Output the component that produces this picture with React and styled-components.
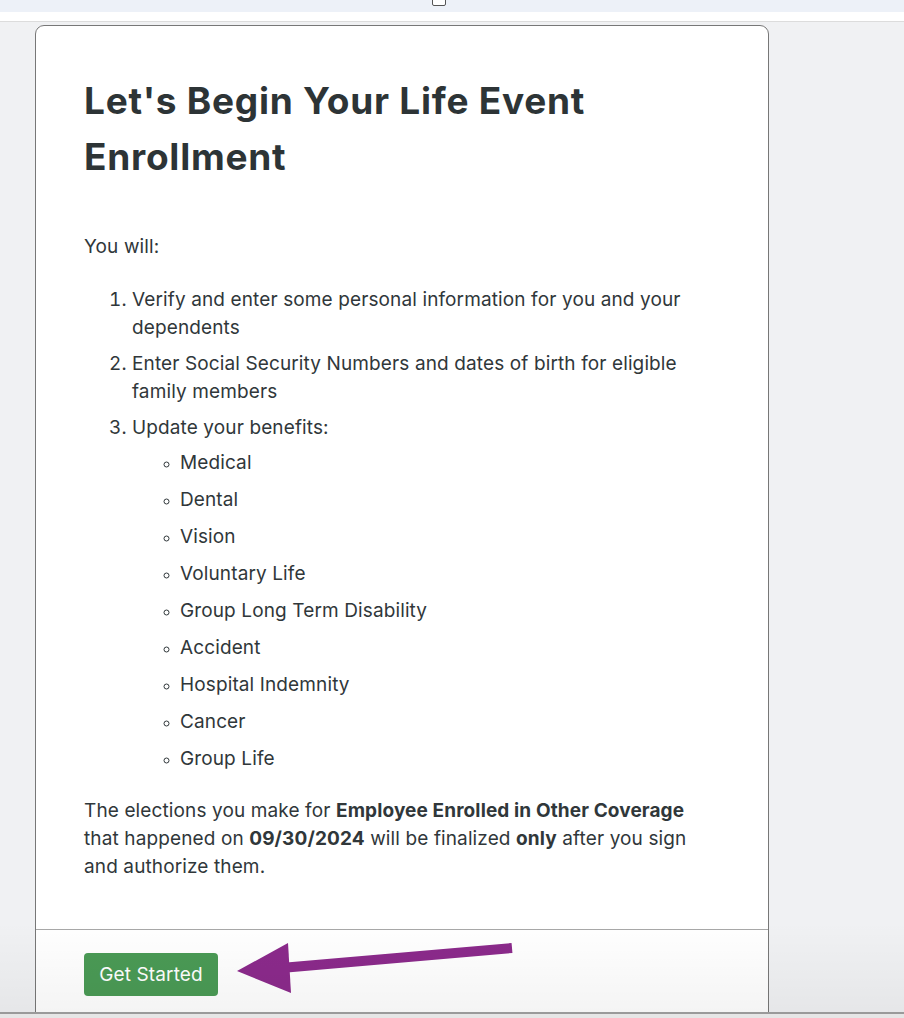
import React from "react";
import styled, { createGlobalStyle } from "styled-components";

const Global = createGlobalStyle`
  html, body { margin: 0; padding: 0; height: 100%; overflow: hidden; }
  body { font-family: Inter, "Noto Sans", sans-serif; background: #f0f1f3; }
  #root { height: 100%; }
`;

const Frame = styled.div`
  height: 100vh;
  display: flex;
  flex-direction: column;
  position: relative;
`;

const TopStrip = styled.div`
  height: 12px;
  background: #edf1f8;
  position: relative;
  flex: none;
`;

const Handle = styled.div`
  position: absolute;
  left: 432px;
  top: -6px;
  width: 12px;
  height: 10px;
  background: #fff;
  border: 1px solid #555;
  border-radius: 2px;
`;

const WhiteBar = styled.div`
  height: 9px;
  background: #fff;
  border-bottom: 1px solid #dcdcdc;
  flex: none;
`;

const Main = styled.main`
  flex: 1;
  min-height: 0;
  overflow: hidden;
  padding: 3px 0 0 35px;
  position: relative;
  &::after {
    content: "";
    position: absolute;
    left: 0;
    right: 0;
    bottom: 0;
    height: 90px;
    background: linear-gradient(to bottom, rgba(0, 0, 0, 0), rgba(0, 0, 0, 0.045));
    pointer-events: none;
  }
`;

const BottomBar = styled.div`
  height: 4px;
  border-top: 2px solid #9a9a9a;
  background: #e6e6e6;
  flex: none;
`;

const Card = styled.section`
  width: 732px;
  background: #fff;
  border: 1px solid #777;
  border-radius: 9px;
  color: #30373a;
`;

const Body = styled.div`
  padding: 47px 48px 48px 48px;
  border-bottom: 1px solid #a8a8a8;
`;

const Title = styled.h1`
  margin: 0 0 48px;
  font-size: 37px;
  line-height: 56px;
  font-weight: 700;
  color: #2d3436;
  letter-spacing: 0.75px;
`;

const Para = styled.p`
  margin: 0;
  font-size: 19px;
  line-height: 28px;
  letter-spacing: 0.12px;
  b { font-weight: 700; }
`;

const Ordered = styled.ol`
  margin: 25px 0 24px;
  padding-left: 48px;
  font-size: 19px;
  line-height: 28px;
  letter-spacing: 0.12px;
`;

const Step = styled.li`
  & + & { margin-top: 8px; }
`;

const Bullets = styled.ul`
  list-style: circle;
  margin: 7px 0 0;
  padding-left: 48px;
`;

const Bullet = styled.li`
  & + & { margin-top: 9px; }
  &::marker { font-size: 14px; }
`;

const Footer = styled.div`
  position: relative;
  padding: 23px 48px 60px;
`;

const Button = styled.button`
  font-family: Inter, "Noto Sans", sans-serif;
  font-size: 19px;
  letter-spacing: 0.12px;
  color: #fff;
  background: #4a9a55;
  border: none;
  border-radius: 4px;
  height: 43px;
  width: 134px;
  padding: 0;
  cursor: pointer;
`;

const Arrow = styled.svg`
  position: absolute;
  left: 195px;
  top: 8px;
`;

const benefits = [
  "Medical",
  "Dental",
  "Vision",
  "Voluntary Life",
  "Group Long Term Disability",
  "Accident",
  "Hospital Indemnity",
  "Cancer",
  "Group Life",
];

export default function App() {
  return (
    <>
      <Global />
      <Frame>
        <TopStrip>
          <Handle />
        </TopStrip>
        <WhiteBar />
        <Main>
          <Card>
            <Body>
              <Title>
                Let's Begin Your Life Event
                <br />
                Enrollment
              </Title>
              <Para>You will:</Para>
              <Ordered>
                <Step>Verify and enter some personal information for you and your dependents</Step>
                <Step>Enter Social Security Numbers and dates of birth for eligible family members</Step>
                <Step>
                  Update your benefits:
                  <Bullets>
                    {benefits.map((b) => (
                      <Bullet key={b}>{b}</Bullet>
                    ))}
                  </Bullets>
                </Step>
              </Ordered>
              <Para>
                The elections you make for <b>Employee Enrolled in Other Coverage</b> that happened on{" "}
                <b>09/30/2024</b> will be finalized <b>only</b> after you sign and authorize them.
              </Para>
            </Body>
            <Footer>
              <Button>Get Started</Button>
              <Arrow width="290" height="64" viewBox="0 0 290 64">
                <line x1="50" y1="30" x2="281" y2="10" stroke="#8b2a8b" strokeWidth="10" />
                <polygon points="6,33 57,5 60,55" fill="#8b2a8b" />
              </Arrow>
            </Footer>
          </Card>
        </Main>
        <BottomBar />
      </Frame>
    </>
  );
}
